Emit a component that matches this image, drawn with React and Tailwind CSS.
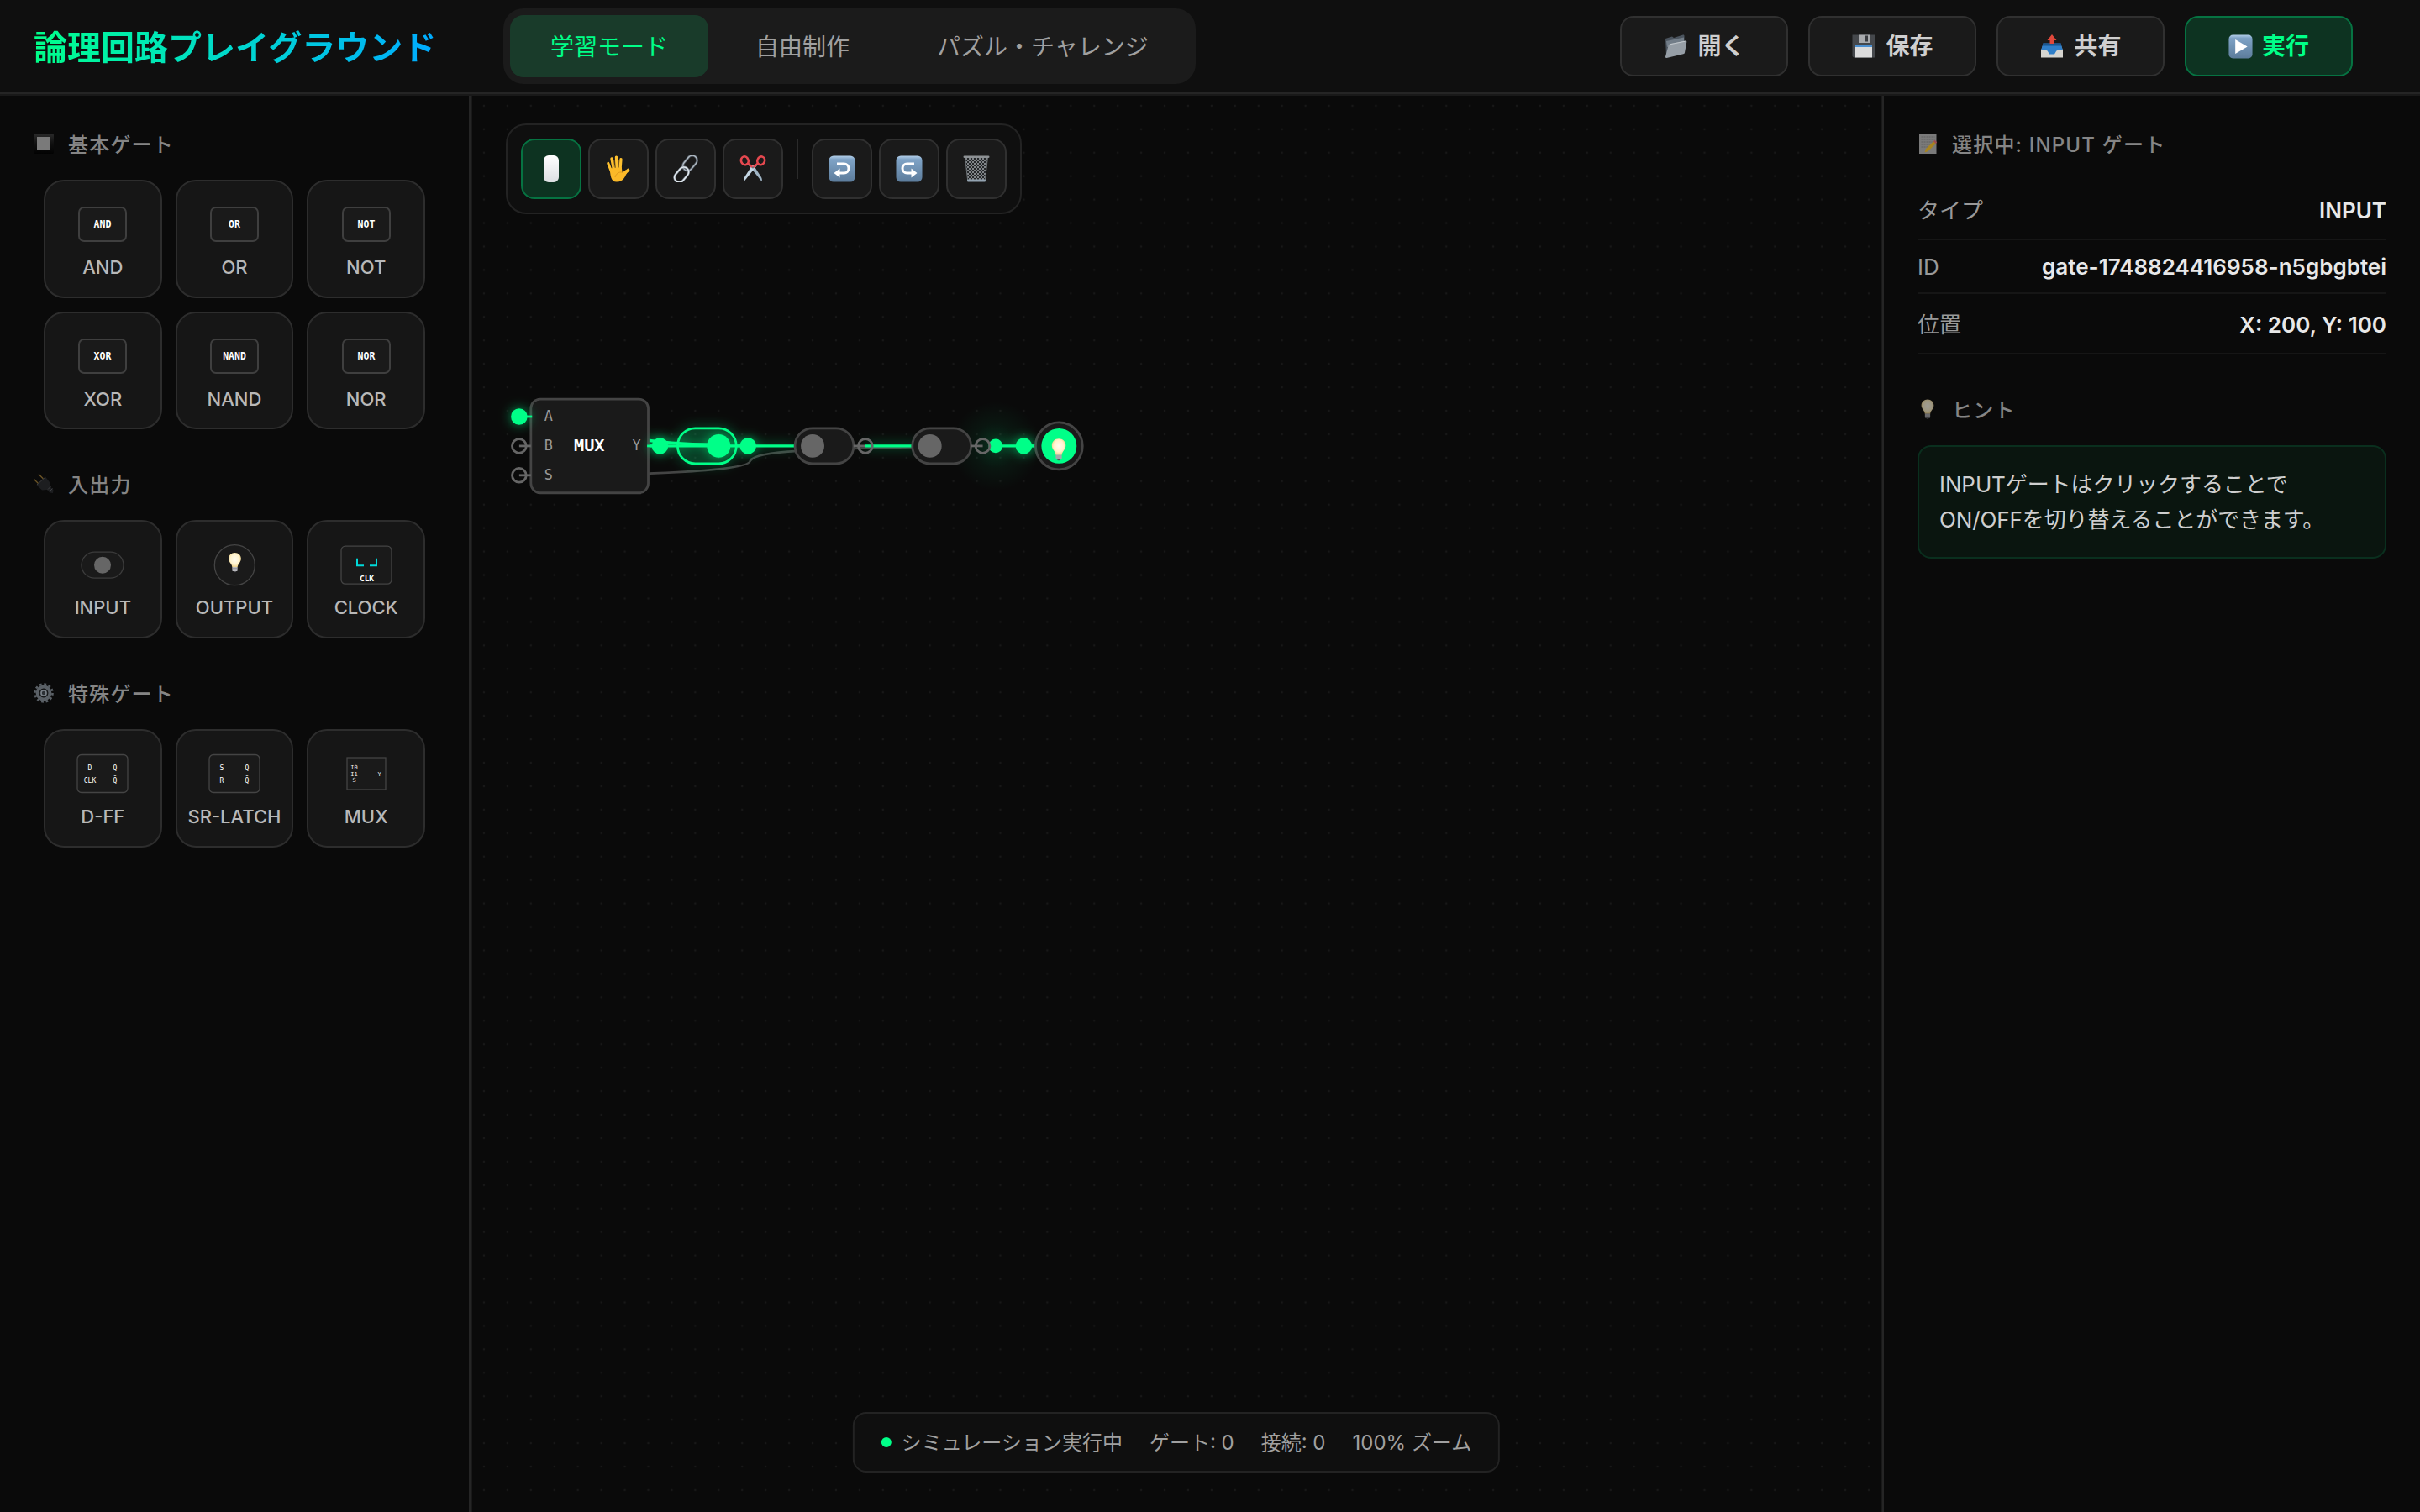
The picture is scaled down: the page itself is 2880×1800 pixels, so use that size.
const SANS = "font-['Inter','Noto_Sans_CJK_JP',sans-serif]";
const MONO = "'DejaVu Sans Mono', monospace";

/* ---------- small pictograms ---------- */

function Bulb({ className, x, y, width, height }) {
  return (
    <svg className={className} x={x} y={y} width={width} height={height} viewBox="0 0 16 24">
      <defs>
        <radialGradient id="bulbGlass" cx="0.5" cy="0.45" r="0.6">
          <stop offset="0" stopColor="#fffdf0" />
          <stop offset="0.6" stopColor="#fff3cd" />
          <stop offset="1" stopColor="#e9c873" />
        </radialGradient>
      </defs>
      <path d="M8 0.5C3.8 0.5 0.6 3.6 0.6 7.6c0 2.600 1.300 4.200 2.500 6 1 1.500 1.500 2.700 1.700 4.200h6.400c.2-1.500.7-2.700 1.700-4.200 1.200-1.800 2.500-3.400 2.500-6C15.400 3.600 12.200.5 8 .5z" fill="url(#bulbGlass)" />
      <path d="M4.900 17.600h6.200v3.800c0 .8-.6 1.200-1.300 1.200H6.200c-.7 0-1.300-.4-1.300-1.200z" fill="#b9b9bd" />
      <path d="M4.900 19h6.200M4.900 20.800h6.200" stroke="#8b8b90" strokeWidth="0.700" />
      <path d="M6.300 22.600h3.400l-.6 1.200H6.900z" fill="#55555a" />
    </svg>
  );
}

function Folder() {
  return (
    <svg className="h-[30px] w-[30px]" viewBox="0 0 30 30">
      <path d="M3 6l8-2.500 2 1.500 11-3.500c1-.2 1.500.3 1.500 1.500V14L4 27z" fill="#4b545e" />
      <path d="M4 9l21-4.500v7L5 16z" fill="#727d88" />
      <path d="M9 12l17.500-3.500c1.300-.3 2 .3 1.800 1.500L26 22.500c-.2 1-.7 1.500-1.700 1.800L4.500 29c-1 .2-1.700-.3-1.500-1.400L6.500 14.500c.3-1.300 1-2.100 2.500-2.500z" fill="#969ea6" />
      <path d="M9 12.700l17.500-3.500" stroke="#c3c9ce" strokeWidth="1" />
    </svg>
  );
}

function Floppy() {
  return (
    <svg className="h-[30px] w-[30px]" viewBox="0 0 30 30">
      <path d="M1.500 1.500h27v27H3L1.500 27z" fill="#45484c" />
      <path d="M9 1.500h13v9.500H9z" fill="#a9abae" />
      <path d="M16.500 2.500h3.500v7h-3.500z" fill="#3a3c40" />
      <path d="M5 13.500h20v15H5z" fill="#dcdcdc" />
      <path d="M5 13.500h20V16H5z" fill="#4b8fd0" />
    </svg>
  );
}

function Outbox() {
  return (
    <svg className="h-[30px] w-[30px]" viewBox="0 0 30 30">
      <path d="M5 12h20l3 8v8.500H2V20z" fill="#d6d5d0" />
      <path d="M4.500 11.500h21L28 20h-6.500c-.5 0-1 .2-1.300.7L18 24.500h-6l-2.200-3.800c-.3-.5-.8-.7-1.300-.7H2z" fill="#2f7fc9" />
      <path d="M4.500 11.500h21l1 3h-23z" fill="#1b568f" />
      <path d="M15 1l5.500 7h-3v4h-5V8h-3z" fill="#e0483b" />
    </svg>
  );
}

function BlueTile({ className, children }) {
  return (
    <svg className={className} viewBox="0 0 32 32">
      <defs>
        <linearGradient id="tileBlue" x1="0" y1="0" x2="0" y2="1">
          <stop offset="0" stopColor="#b4d0ea" />
          <stop offset="0.140" stopColor="#7fa3c6" />
          <stop offset="1" stopColor="#5c7c9b" />
        </linearGradient>
      </defs>
      <rect x="0.500" y="0.500" width="31" height="31" rx="5.500" fill="url(#tileBlue)" />
      {children}
    </svg>
  );
}

function Hand() {
  return (
    <svg className="h-8 w-8" viewBox="0 0 32 32">
      <g transform="translate(-1 0)">
        <g stroke="#fdc02f" strokeLinecap="round" fill="none">
          <path d="M4.800 9.500L8.500 19" strokeWidth="3.200" />
          <path d="M9 4L11.500 17" strokeWidth="3.400" />
          <path d="M14.500 2.200L15.300 16" strokeWidth="3.400" />
          <path d="M20 4.500L19 17" strokeWidth="3.200" />
          <path d="M28.500 17.500L21.500 24" strokeWidth="3.600" />
        </g>
        <path d="M6.800 15.500l14-1.500.8 6.500 4.200-3.200 1.500 3.200c-2 3.300-3.700 11-12.500 11C8 31.500 7.300 24 6.800 15.500z" fill="#fbb928" />
        <path d="M11.900 6v8M17.200 5v9" stroke="#c98b1d" strokeWidth="0.800" />
        <path d="M13 26c1-4 4-6.500 8.500-6" stroke="#e09b1d" strokeWidth="1" fill="none" />
      </g>
    </svg>
  );
}

function Chain() {
  return (
    <svg className="h-8 w-8" viewBox="0 0 32 32" fill="none">
      <g transform="rotate(-50 16 16)">
        <rect x="14.500" y="9.800" width="20" height="11.500" rx="5.750" stroke="#59616a" strokeWidth="2.800" />
        <rect x="14.500" y="9.800" width="20" height="11.500" rx="5.750" stroke="#b4bec7" strokeWidth="1.200" />
        <rect x="-2.500" y="11" width="20" height="11.500" rx="5.750" stroke="#7d8791" strokeWidth="2.800" />
        <rect x="-2.500" y="11" width="20" height="11.500" rx="5.750" stroke="#e3eaf0" strokeWidth="1.500" />
      </g>
    </svg>
  );
}

function Scissors() {
  return (
    <svg className="h-8 w-8" viewBox="0 0 32 32" fill="none">
      <path d="M10 10.500L26.500 31c.8-2 .3-3.800-.8-5.600L17 12z" fill="#9fb4c4" />
      <path d="M22 10.500L5.500 31c-.8-2-.3-3.800.8-5.600L15 12z" fill="#c3d5e2" />
      <ellipse cx="6.300" cy="6.300" rx="4.300" ry="5" stroke="#e5484f" strokeWidth="2.600" transform="rotate(-20 6.300 6.300)" />
      <ellipse cx="25.700" cy="6.300" rx="4.300" ry="5" stroke="#e5484f" strokeWidth="2.600" transform="rotate(20 25.700 6.300)" />
      <path d="M10 9.500l5.500 4.500M22 9.500L16.500 14" stroke="#e5484f" strokeWidth="2.400" />
      <circle cx="16" cy="14.500" r="1" fill="#5e6a74" />
    </svg>
  );
}

function Trash() {
  return (
    <svg className="h-8 w-8" viewBox="0 0 32 32">
      <defs>
        <pattern id="mesh" width="4" height="4" patternUnits="userSpaceOnUse">
          <path d="M0 0l4 4M4 0L0 4" stroke="#8b9094" strokeWidth="0.900" />
        </pattern>
      </defs>
      <path d="M2.500 2h27l-3.300 29H5.800z" fill="#25282a" />
      <path d="M2.500 2h27l-3.300 29H5.800z" fill="url(#mesh)" />
      <path d="M2.500 2l3.300 29M29.500 2l-3.300 29" stroke="#6b7074" strokeWidth="1" />
      <rect x="0.500" y="0.500" width="31" height="2.600" rx="1.300" fill="#8d9194" />
      <rect x="5" y="28.500" width="22" height="3" rx="1.200" fill="#93a3b1" />
    </svg>
  );
}

function Plug() {
  return (
    <svg className="h-6 w-6" viewBox="0 0 24 24">
      <path d="M0.500 6.500L6 12M6 0.500L11.500 6" stroke="#6b5426" strokeWidth="1.400" />
      <path d="M3.500 13.500L14 3.500l5 6.500.5 5 4 4-.5 4-4-.5-3-3.500-6 .5z" fill="#1d1e20" />
      <path d="M4 13L14 4" stroke="#3a3b3e" strokeWidth="1" />
      <path d="M17 18.500l3.500-3.500M19 21l3.500-3.500" stroke="#3f4043" strokeWidth="1" />
    </svg>
  );
}

function Gear() {
  return (
    <svg className="h-6 w-6" viewBox="0 0 24 24" fill="none">
      <circle cx="12" cy="12" r="10.500" stroke="#5a6066" strokeWidth="2.600" strokeDasharray="2.750 2.750" />
      <circle cx="12" cy="12" r="7.400" stroke="#5a6066" strokeWidth="4" />
      <circle cx="12" cy="12" r="4.600" fill="#2c3034" />
      <circle cx="12" cy="12" r="3" stroke="#7a8188" strokeWidth="1.600" />
    </svg>
  );
}

function Square() {
  return (
    <svg className="h-6 w-6" viewBox="0 0 24 24">
      <defs>
        <linearGradient id="bevel" x1="0" y1="0" x2="0" y2="1">
          <stop offset="0" stopColor="#2b2b2b" />
          <stop offset="0.500" stopColor="#101010" />
          <stop offset="1" stopColor="#020202" />
        </linearGradient>
      </defs>
      <rect width="24" height="24" rx="1.500" fill="url(#bevel)" />
      <rect x="4" y="4" width="16" height="16" fill="#7a7a7a" />
    </svg>
  );
}

function Memo() {
  return (
    <svg className="h-6 w-6" viewBox="0 0 24 24">
      <rect x="2" y="0" width="20.500" height="24" fill="#7a7a7a" />
      <path d="M4.500 4h16M4.500 7h16M4.500 10h13M4.500 13h11M4.500 16h8" stroke="#606060" strokeWidth="1" strokeDasharray="2 1" />
      <path d="M8.500 22.500l1.500-4.500L19.500 9l2.500 3-9.500 9z" fill="#a88420" />
      <path d="M19 9.300l1.700-1.600 2.500 2.800-1.500 1.600z" fill="#a04b52" />
    </svg>
  );
}

/* ---------- header ---------- */

const ACTIONS = [
  { label: "開く", icon: <Folder /> },
  { label: "保存", icon: <Floppy /> },
  { label: "共有", icon: <Outbox /> },
  {
    label: "実行",
    active: true,
    icon: (
      <BlueTile className="h-[29px] w-[29px]">
        <path d="M9 6.500L25 16 9 25.500z" fill="#fff" />
      </BlueTile>
    ),
  },
];

function Header() {
  return (
    <header className="flex h-28 shrink-0 items-center border-b-2 border-[#252525] bg-[#0f0f0f] pr-20 pl-10">
      <h1 className="w-[480px] bg-gradient-to-r from-[#00ff88] to-[#00aaff] bg-clip-text pt-1 text-[40px] leading-[60px] font-bold whitespace-nowrap text-transparent">
        論理回路プレイグラウンド
      </h1>
      <nav className="ml-[79px] flex h-[90px] gap-2 rounded-3xl bg-[#1b1b1b] p-2 text-[28px]">
        <div className="flex items-center rounded-2xl bg-[#193b2a] px-12 pt-0.5 text-[#00ff88]">学習モード</div>
        <div className="flex items-center rounded-2xl px-12 pt-0.5 text-[#a0a0a0]">自由制作</div>
        <div className="flex items-center rounded-2xl px-12 pt-0.5 text-[#a0a0a0]">パズル・チャレンジ</div>
      </nav>
      <div className="ml-auto flex gap-6">
        {ACTIONS.map((a) => (
          <button
            key={a.label}
            className={
              a.active
                ? "flex h-[72px] w-[200px] items-center justify-center gap-[11px] rounded-2xl border-2 border-[#067342] bg-[#0d3321] text-[28px] font-bold text-[#00ff88]"
                : "flex h-[72px] w-[200px] items-center justify-center gap-[11px] rounded-2xl border-2 border-[#303030] bg-[#1a1a1a] text-[28px] font-bold text-[#cfcfcf]"
            }
          >
            {a.icon}
            <span>{a.label}</span>
          </button>
        ))}
      </div>
    </header>
  );
}

/* ---------- palette ---------- */

function T({ x, y, size, children, fill = "#fff", weight = 400, anchor = "middle" }) {
  return (
    <text x={x} y={y} fontSize={size} fill={fill} fontWeight={weight} textAnchor={anchor} fontFamily={MONO}>
      {children}
    </text>
  );
}

/* Each glyph is drawn on an 80 x 60 board centred at 40,30. */
function Glyph({ kind }) {
  switch (kind) {
    case "INPUT":
      return (
        <>
          <rect x="15" y="15.200" width="50" height="31" rx="15.500" fill="#1a1a1a" stroke="#3c3c3c" strokeWidth="1.300" />
          <circle cx="40" cy="30.700" r="10" fill="#666" />
        </>
      );
    case "OUTPUT":
      return (
        <>
          <circle cx="40.300" cy="30.700" r="24" fill="#1a1a1a" stroke="#444" strokeWidth="1.300" />
          <Bulb x="32.500" y="15.500" width="16" height="24" />
        </>
      );
    case "CLOCK":
      return (
        <>
          <rect x="10" y="8.200" width="60" height="45" rx="5" fill="#1a1a1a" stroke="#444" strokeWidth="1.300" />
          <path d="M29 22.700v8.500h8M52 22.700v8.500h-8" stroke="#00d9d9" strokeWidth="2" fill="none" />
          <T x="40.500" y="49.500" size="9.500" weight="700">CLK</T>
        </>
      );
    case "D-FF":
    case "SR-LATCH":
      return (
        <>
          <rect x="10" y="7.500" width="60" height="45" rx="5" fill="#1a1a1a" stroke="#444" strokeWidth="1.300" />
          <T x="25" y="25.500" size="8" fill="#fff">{kind === "D-FF" ? "D" : "S"}</T>
          <T x="25" y="40.500" size="8" fill="#fff">{kind === "D-FF" ? "CLK" : "R"}</T>
          <T x="55" y="25.500" size="8" fill="#fff">Q</T>
          <T x="55" y="40.500" size="8" fill="#fff">Q̄</T>
        </>
      );
    case "MUX":
      return (
        <>
          <rect x="17" y="11" width="46" height="38" fill="#1a1a1a" stroke="#444" strokeWidth="1.300" />
          <T x="25.500" y="24.500" size="7" fill="#f0f0f0">I0</T>
          <T x="25.500" y="32.500" size="7" fill="#f0f0f0">I1</T>
          <T x="25.500" y="39.500" size="7" fill="#f0f0f0">S</T>
          <T x="55.500" y="32.500" size="7" fill="#f0f0f0">Y</T>
        </>
      );
    default:
      return (
        <>
          <rect x="12" y="10" width="56" height="40" rx="6" fill="#1a1a1a" stroke="#3f3f3f" strokeWidth="2" />
          <T x="40" y="33.500" size="11.500" weight="700">{kind}</T>
        </>
      );
  }
}

function Section({ icon, title, items }) {
  return (
    <section className="mb-12">
      <h2 className="mb-6 flex h-9 items-center gap-[17px] text-2xl font-medium tracking-[1.2px] text-[#858585]">
        <span className="-mt-0.5">{icon}</span>
        <span className="pt-0.5">{title}</span>
      </h2>
      <div className="mx-3 grid grid-cols-3 gap-4">
        {items.map((k) => (
          <div key={k} className="flex aspect-square flex-col items-center rounded-3xl border-2 border-[#2d2d2d] bg-[#161616] pt-[21px]">
            <svg className="h-[60px] w-20 shrink-0" viewBox="0 0 80 60">
              <Glyph kind={k} />
            </svg>
            <div className="mt-[9px] text-[22px] leading-6 font-medium whitespace-nowrap text-[#b8b8b8]">{k}</div>
          </div>
        ))}
      </div>
    </section>
  );
}

function Sidebar() {
  return (
    <aside className="w-[560px] shrink-0 border-r-2 border-[#252525] bg-[#0a0a0a] px-10 pt-10">
      <Section icon={<Square />} title="基本ゲート" items={["AND", "OR", "NOT", "XOR", "NAND", "NOR"]} />
      <Section icon={<Plug />} title="入出力" items={["INPUT", "OUTPUT", "CLOCK"]} />
      <Section icon={<Gear />} title="特殊ゲート" items={["D-FF", "SR-LATCH", "MUX"]} />
    </aside>
  );
}

/* ---------- circuit canvas ---------- */

function PortOff({ x, y, to }) {
  return (
    <g stroke="#666" strokeWidth="2" fill="none">
      <circle cx={x} cy={y} r="6" />
      <path d={`M${x} ${y}H${to}`} />
    </g>
  );
}

function PortOn({ x, y, to }) {
  return (
    <g filter="url(#glow)">
      <path d={`M${x} ${y}H${to}`} stroke="#00ff88" strokeWidth="2" />
      <circle cx={x} cy={y} r="7" fill="#00ff88" />
    </g>
  );
}

function SwitchOff({ x }) {
  return (
    <g>
      <rect x={x - 25} y="85" width="50" height="30" rx="15" fill="#1a1a1a" stroke="#444" strokeWidth="2" />
      <circle cx={x - 10} cy="100" r="10" fill="#666" />
      <PortOff x={x + 35} y={100} to={x + 25} />
    </g>
  );
}

function Circuit() {
  return (
    <svg className="absolute inset-0 h-full w-full" viewBox="0 -198.500 1200 1207.160">
      <defs>
        <pattern id="dots" width="20" height="20" patternUnits="userSpaceOnUse">
          <circle cx="10" cy="10" r="0.850" fill="#181818" />
        </pattern>
        <filter id="glow" filterUnits="userSpaceOnUse" x="-20" y="20" width="560" height="160">
          <feDropShadow dx="0" dy="0" stdDeviation="5" floodColor="#00ff88" floodOpacity="0.600" />
        </filter>
        <radialGradient id="halo">
          <stop offset="0" stopColor="#00ff88" stopOpacity="0.160" />
          <stop offset="0.500" stopColor="#00ff88" stopOpacity="0.050" />
          <stop offset="1" stopColor="#00ff88" stopOpacity="0" />
        </radialGradient>
      </defs>
      <rect x="0" y="-200" width="1200" height="1210" fill="url(#dots)" />

      <g fill="none" strokeWidth="2">
        <path d="M120 124.500C175 123 237 120 237 112.500C240 107 262 105 278 104.200C320 102 350 101.200 375 101" stroke="#444" />
        <g stroke="#00ff88" strokeWidth="2.400" filter="url(#glow)">
          <path d="M130 92C160 97.500 180 98.500 210 98.900" />
          <path d="M150 100.010L275 100" />
          <path d="M335 100.010L380 100" />
          <path d="M445 100.010L480 100" />
        </g>
      </g>

      <rect x="50" y="60" width="100" height="80" rx="8" fill="#1a1a1a" stroke="#444" strokeWidth="2" />
      <PortOn x={40} y={75} to={51} />
      <PortOff x={40} y={100} to={50} />
      <PortOff x={40} y={125} to={50} />
      <PortOn x={160} y={100} to={149} />
      <T x="65" y="78.400" size="12" fill="#999">A</T>
      <T x="65" y="103.400" size="12" fill="#999">B</T>
      <T x="65" y="128.400" size="12" fill="#999">S</T>
      <T x="140" y="103.400" size="12" fill="#999">Y</T>
      <T x="99.700" y="104.300" size="14.500" weight="700">MUX</T>

      <g filter="url(#glow)">
        <rect x="175" y="85" width="50" height="30" rx="15" fill="#00ff88" fillOpacity="0.100" stroke="#00ff88" strokeWidth="2" />
        <circle cx="210" cy="100" r="10" fill="#00ff88" />
      </g>
      <PortOn x={235} y={100} to={225} />

      <SwitchOff x={300} />
      <circle cx="446" cy="100" r="38" fill="url(#halo)" />
      <circle cx="446" cy="100" r="6" fill="#00ff88" />
      <SwitchOff x={400} />

      <circle cx="500" cy="100" r="20" fill="#1a1a1a" stroke="#444" strokeWidth="2" />
      <circle cx="500" cy="100" r="15" fill="#00ff88" />
      <Bulb x="493.400" y="93.300" width="12.800" height="19.500" />
      <PortOn x={470} y={100} to={479} />
    </svg>
  );
}

function Tool({ active, children }) {
  return (
    <button
      className={
        active
          ? "flex h-[72px] w-[72px] items-center justify-center rounded-2xl border-2 border-[#067342] bg-[#0d3321]"
          : "flex h-[72px] w-[72px] items-center justify-center rounded-2xl border-2 border-[#303030] bg-[#1a1a1a]"
      }
    >
      {children}
    </button>
  );
}

function Toolbar() {
  return (
    <div className="absolute top-[33px] left-10 flex gap-2 rounded-3xl border-2 border-[#232323] bg-[#0f0f0f] p-4">
      <Tool active>
        <span className="h-8 w-[18px] rounded-md bg-gradient-to-b from-white to-[#dcdfe2]" />
      </Tool>
      <Tool><Hand /></Tool>
      <Tool><Chain /></Tool>
      <Tool><Scissors /></Tool>
      <span className="mx-2 h-12 w-0.5 bg-[#2a2a2a]" />
      <Tool>
        <BlueTile className="h-8 w-8">
          <path d="M10 10h8.500a5.500 5.500 0 0 1 0 11H13" stroke="#fff" strokeWidth="3" fill="none" />
          <path d="M13.500 15.500v11L6.500 21z" fill="#fff" />
        </BlueTile>
      </Tool>
      <Tool>
        <BlueTile className="h-8 w-8">
          <path d="M22 10h-8.500a5.500 5.500 0 0 0 0 11H19" stroke="#fff" strokeWidth="3" fill="none" />
          <path d="M18.500 15.500v11l7-5.500z" fill="#fff" />
        </BlueTile>
      </Tool>
      <Tool><Trash /></Tool>
    </div>
  );
}

function StatusBar() {
  return (
    <div className="absolute bottom-[47px] left-1/2 flex h-[72px] -translate-x-1/2 items-center gap-8 rounded-2xl border-2 border-[#232323] bg-[#0f0f0f] px-8 text-2xl whitespace-nowrap text-[#a0a0a0]">
      <span className="flex items-center gap-3">
        <span className="h-3 w-3 rounded-full bg-[#00ff88]" />
        <span className="pt-0.5">シミュレーション実行中</span>
      </span>
      <span className="pt-0.5">ゲート: 0</span>
      <span className="pt-0.5">接続: 0</span>
      <span className="pt-0.5">100% ズーム</span>
    </div>
  );
}

/* ---------- inspector ---------- */

function Row({ label, value, className }) {
  return (
    <div className={className}>
      <span className="text-[#999]">{label}</span>
      <span className="font-semibold text-[#e8e8e8]">{value}</span>
    </div>
  );
}

function Inspector() {
  return (
    <aside className="w-[640px] shrink-0 border-l-2 border-[#252525] bg-[#0a0a0a] px-10 pt-10">
      <h2 className="mb-6 flex h-9 items-center gap-[17px] text-2xl font-medium tracking-[1.2px] text-[#858585]">
        <span className="-mt-0.5"><Memo /></span>
        <span className="pt-0.5">選択中: INPUT ゲート</span>
      </h2>
      <div className="text-[26px]">
        <Row className="flex h-[72px] items-center justify-between border-b-2 border-[#161616] pt-0.5" label="タイプ" value="INPUT" />
        <Row className="flex h-16 items-center justify-between border-b-2 border-[#161616]" label="ID" value="gate-1748824416958-n5gbgbtei" />
        <Row className="flex h-[72px] items-center justify-between border-b-2 border-[#161616] pt-0.5" label="位置" value="X: 200, Y: 100" />
      </div>
      <h2 className="mt-12 mb-6 flex h-9 items-center gap-[17px] text-2xl font-medium tracking-[1.2px] text-[#858585]">
        <span className="-mt-0.5 flex w-6 justify-center opacity-60"><Bulb className="h-6 w-4" /></span>
        <span className="pt-0.5">ヒント</span>
      </h2>
      <div className="rounded-2xl border-2 border-[#0a2f1e] bg-[#0a150f] p-6 text-[26px] leading-[41.6px] tracking-[-0.1px] text-[#cfcfcf]">
        INPUTゲートはクリックすることで
        <br />
        ON/OFFを切り替えることができます。
      </div>
    </aside>
  );
}

export default function App() {
  return (
    <div className={`${SANS} flex h-[1800px] w-[2880px] flex-col gap-0.5 overflow-hidden bg-[#191919]`}>
      <Header />
      <div className="flex min-h-0 flex-1 gap-0.5">
        <Sidebar />
        <main className="relative flex-1 overflow-hidden bg-[#0a0a0a]">
          <Circuit />
          <Toolbar />
          <StatusBar />
        </main>
        <Inspector />
      </div>
    </div>
  );
}
